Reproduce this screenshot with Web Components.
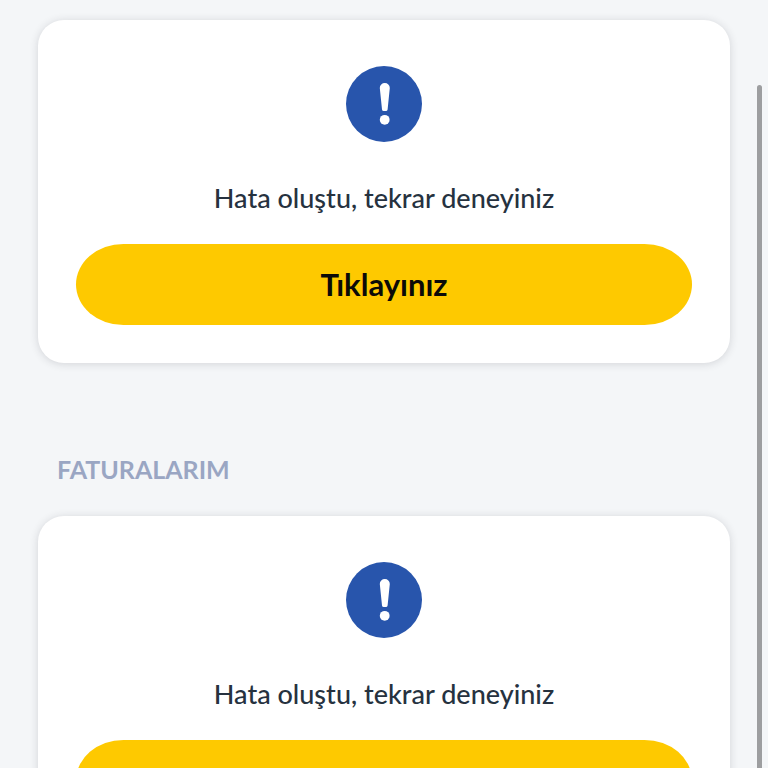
<!DOCTYPE html>
<html lang="tr">
<head>
  <meta charset="utf-8">
  <meta name="viewport" content="width=device-width, initial-scale=1">
  <title>Faturalarım</title>
  <style>
    html {
      scrollbar-width: none;
      background: #f4f6f8;
    }
    body {
      margin: 0;
      font-family: Lato, "Liberation Sans", sans-serif;
      color: #26323f;
    }
  </style>
</head>
<body>
  <app-page>
    <error-card action="Tıklayınız">Hata oluştu, tekrar deneyiniz</error-card>
    <page-section heading="FATURALARIM">
      <error-card action="Tıklayınız">Hata oluştu, tekrar deneyiniz</error-card>
    </page-section>
  </app-page>

  <script>
    // Round blue badge with an exclamation mark
    class AlertIcon extends HTMLElement {
      constructor() {
        super();
        this.attachShadow({ mode: "open" });
        this.shadowRoot.innerHTML = `
          <style>
            :host {
              display: block;
              width: 76px;
              height: 76px;
            }
            svg {
              display: block;
              width: 100%;
              height: 100%;
            }
          </style>
          <svg viewBox="0 0 76 76" aria-hidden="true">
            <circle cx="38" cy="38" r="38" fill="#2855ac"/>
            <path d="M33.8 22a5 5 0 0 1 10 0L41.6 43.5a1.8 1.8 0 0 1-1.8 1.6h-2a1.8 1.8 0 0 1-1.8-1.6z" fill="#fff"/>
            <circle cx="38.7" cy="53.8" r="4.9" fill="#fff"/>
          </svg>
        `;
      }
    }
    customElements.define("alert-icon", AlertIcon);

    // Yellow pill button
    class PillButton extends HTMLElement {
      constructor() {
        super();
        this.attachShadow({ mode: "open" });
        this.shadowRoot.innerHTML = `
          <style>
            :host {
              display: block;
            }
            button {
              display: block;
              width: 100%;
              padding: 22px 24px;
              border: none;
              border-radius: 48px / 41px;
              background: #fec900;
              color: #0b0a08;
              font: inherit;
              font-size: 31px;
              font-weight: 700;
              line-height: 37px;
              cursor: pointer;
            }
          </style>
          <button type="button"><slot></slot></button>
        `;
      }
    }
    customElements.define("pill-button", PillButton);

    // White card: icon, message from the slot, and a retry button
    class ErrorCard extends HTMLElement {
      constructor() {
        super();
        this.attachShadow({ mode: "open" });
      }

      connectedCallback() {
        this.shadowRoot.innerHTML = `
          <style>
            :host {
              display: flex;
              flex-direction: column;
              align-items: center;
              padding: 46px 38px 38px;
              border-radius: 26px;
              background: #fff;
              box-shadow: 0 1px 9px rgba(40, 40, 50, 0.16);
            }
            p {
              margin: 39px 0 29px;
              font-size: 27px;
              font-weight: 500;
              line-height: 34px;
              text-align: center;
            }
            pill-button {
              align-self: stretch;
            }
          </style>
          <alert-icon></alert-icon>
          <p><slot></slot></p>
          <pill-button>${this.getAttribute("action")}</pill-button>
        `;
      }
    }
    customElements.define("error-card", ErrorCard);

    // Heading with its content below
    class PageSection extends HTMLElement {
      constructor() {
        super();
        this.attachShadow({ mode: "open" });
      }

      connectedCallback() {
        this.shadowRoot.innerHTML = `
          <style>
            :host {
              display: block;
            }
            h2 {
              margin: 0 0 31px;
              padding: 0 19px;
              color: #9aa6c3;
              font-size: 25px;
              font-weight: 700;
              line-height: 32px;
            }
          </style>
          <h2>${this.getAttribute("heading")}</h2>
          <slot></slot>
        `;
      }
    }
    customElements.define("page-section", PageSection);

    // Scrolling column with a thin scroll thumb over its right edge
    class AppPage extends HTMLElement {
      constructor() {
        super();
        this.attachShadow({ mode: "open" });
        this.shadowRoot.innerHTML = `
          <style>
            :host {
              display: block;
            }
            main {
              display: flex;
              flex-direction: column;
              gap: 90px;
              padding: 20px 38px;
            }
            .thumb {
              position: fixed;
              top: 85px;
              right: 6px;
              bottom: -6px;
              width: 5px;
              border-radius: 3px;
              background: #9d9ea0;
            }
          </style>
          <main><slot></slot></main>
          <div class="thumb"></div>
        `;
      }
    }
    customElements.define("app-page", AppPage);
  </script>
</body>
</html>
